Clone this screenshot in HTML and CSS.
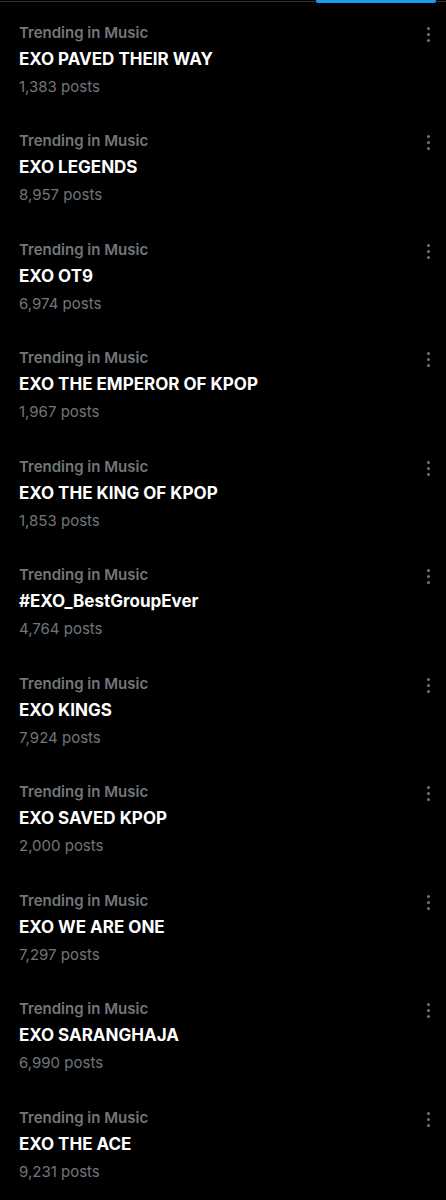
FILE: index.html
```html
<!DOCTYPE html>
<html lang="en">
<head>
<meta charset="UTF-8">
<meta name="viewport" content="width=device-width, initial-scale=1.0">
<title>Trending</title>
<link rel="stylesheet" href="styles.css">
</head>
<body>
    <div class="tabbar">
        <div class="tab-indicator"></div>
    </div>

    <ul class="trend-list">
        <li class="trend">
            <div class="trend-text">
                <div class="trend-meta">Trending in Music</div>
                <div class="trend-name">EXO PAVED THEIR WAY</div>
                <div class="trend-count">1,383 posts</div>
            </div>
            <span class="more"><i></i><i></i><i></i></span>
        </li>
        <li class="trend">
            <div class="trend-text">
                <div class="trend-meta">Trending in Music</div>
                <div class="trend-name">EXO LEGENDS</div>
                <div class="trend-count">8,957 posts</div>
            </div>
            <span class="more"><i></i><i></i><i></i></span>
        </li>
        <li class="trend">
            <div class="trend-text">
                <div class="trend-meta">Trending in Music</div>
                <div class="trend-name">EXO OT9</div>
                <div class="trend-count">6,974 posts</div>
            </div>
            <span class="more"><i></i><i></i><i></i></span>
        </li>
        <li class="trend">
            <div class="trend-text">
                <div class="trend-meta">Trending in Music</div>
                <div class="trend-name">EXO THE EMPEROR OF KPOP</div>
                <div class="trend-count">1,967 posts</div>
            </div>
            <span class="more"><i></i><i></i><i></i></span>
        </li>
        <li class="trend">
            <div class="trend-text">
                <div class="trend-meta">Trending in Music</div>
                <div class="trend-name">EXO THE KING OF KPOP</div>
                <div class="trend-count">1,853 posts</div>
            </div>
            <span class="more"><i></i><i></i><i></i></span>
        </li>
        <li class="trend">
            <div class="trend-text">
                <div class="trend-meta">Trending in Music</div>
                <div class="trend-name">#EXO_BestGroupEver</div>
                <div class="trend-count">4,764 posts</div>
            </div>
            <span class="more"><i></i><i></i><i></i></span>
        </li>
        <li class="trend">
            <div class="trend-text">
                <div class="trend-meta">Trending in Music</div>
                <div class="trend-name">EXO KINGS</div>
                <div class="trend-count">7,924 posts</div>
            </div>
            <span class="more"><i></i><i></i><i></i></span>
        </li>
        <li class="trend">
            <div class="trend-text">
                <div class="trend-meta">Trending in Music</div>
                <div class="trend-name">EXO SAVED KPOP</div>
                <div class="trend-count">2,000 posts</div>
            </div>
            <span class="more"><i></i><i></i><i></i></span>
        </li>
        <li class="trend">
            <div class="trend-text">
                <div class="trend-meta">Trending in Music</div>
                <div class="trend-name">EXO WE ARE ONE</div>
                <div class="trend-count">7,297 posts</div>
            </div>
            <span class="more"><i></i><i></i><i></i></span>
        </li>
        <li class="trend">
            <div class="trend-text">
                <div class="trend-meta">Trending in Music</div>
                <div class="trend-name">EXO SARANGHAJA</div>
                <div class="trend-count">6,990 posts</div>
            </div>
            <span class="more"><i></i><i></i><i></i></span>
        </li>
        <li class="trend">
            <div class="trend-text">
                <div class="trend-meta">Trending in Music</div>
                <div class="trend-name">EXO THE ACE</div>
                <div class="trend-count">9,231 posts</div>
            </div>
            <span class="more"><i></i><i></i><i></i></span>
        </li>
    </ul>
</body>
</html>
```

FILE: styles.css
```css
/* Global styles */
body {
    font-family: Inter, "Open Sans", Arial, sans-serif;
    margin: 0;
    background-color: #000;
    color: #e7e9ea;
}

/* Tab bar at the top */
.tabbar {
    height: 4px;
    display: flex;
    justify-content: flex-end;
    padding-right: 10px;
    background: linear-gradient(#000 1px, #2f3336 1px, #2f3336 2px, #000 2px);
}
.tab-indicator {
    width: 120px;
    height: 3px;
    background-color: #1d9bf0;
    border-radius: 0 0 2px 2px;
}

/* Trend list */
.trend-list {
    list-style: none;
    margin: 0;
    padding: 0;
}
.trend {
    height: 108.5px;
    box-sizing: border-box;
    padding: 14.5px 16px 0 19px;
    display: flex;
    justify-content: space-between;
    align-items: flex-start;
}
.trend-text div {
    line-height: 27px;
}
.trend-meta {
    font-size: 15px;
    font-weight: 600;
    color: #71767b;
}
.trend-name {
    font-size: 17px;
    font-weight: 700;
    color: #fff;
}
.trend-count {
    font-size: 15px;
    color: #71767b;
}

/* Three dots menu */
.more {
    display: flex;
    flex-direction: column;
    gap: 3px;
    margin-top: 8px;
}
.more i {
    width: 3px;
    height: 3px;
    border-radius: 50%;
    background-color: #71767b;
}
```
